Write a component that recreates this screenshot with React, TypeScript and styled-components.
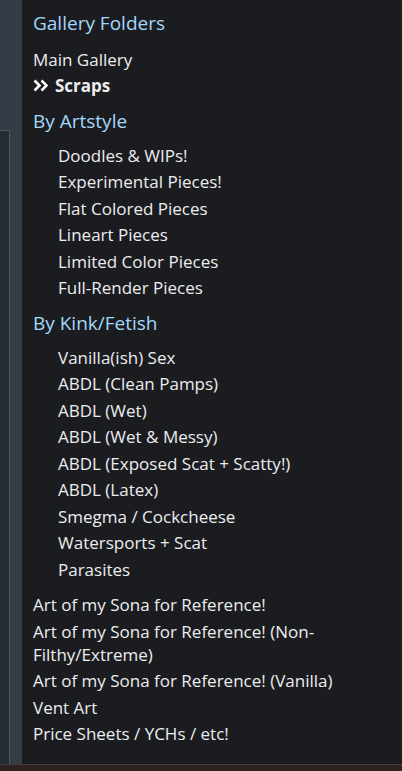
import React from "react";
import styled, { createGlobalStyle } from "styled-components";

const Global = createGlobalStyle`
  html, body { margin: 0; padding: 0; background: #1b1c20; }
  body { font-family: "Open Sans", "Noto Sans", sans-serif; }
  #root { height: 771px; }
`;

const Page = styled.div`
  height: 771px;
  display: flex;
  flex-direction: column;
  overflow: hidden;
`;

const Main = styled.div`
  flex: 1;
  display: flex;
  min-height: 0;
`;

const Rail = styled.div`
  width: 22px;
  flex-shrink: 0;
  background: #343c45;
  display: flex;
  flex-direction: column;
`;

const RailSpacer = styled.div`
  height: 130px;
  flex-shrink: 0;
`;

const RailBox = styled.div`
  flex: 1;
  width: 9px;
  background: #272c33;
  border-top: 1px solid #4b5662;
  border-right: 1px solid #4b5662;
`;

const Panel = styled.nav`
  flex: 1;
  background: #1b1c20;
  padding: 10px 10px 0 11px;
  color: #ecedef;
`;

const Title = styled.h2`
  margin: 0 0 10px;
  font-size: 19px;
  font-weight: 400;
  line-height: 26px;
  color: #a3d8fa;
`;

const Heading = styled.h3`
  margin: 9px 0 8px;
  font-size: 19px;
  font-weight: 400;
  line-height: 26px;
  color: #a3d8fa;
`;

const List = styled.ul<{ $indent?: boolean }>`
  list-style: none;
  margin: 0 0 ${(p) => (p.$indent ? "9px" : "0")};
  padding: 0 0 0 ${(p) => (p.$indent ? "25px" : "0")};
`;

const Item = styled.li<{ $active?: boolean }>`
  font-size: 17px;
  line-height: 23px;
  padding: 1.75px 0;
  font-weight: ${(p) => (p.$active ? 700 : 400)};
  display: flex;
  align-items: center;
  gap: 7px;
`;

const BottomBar = styled.div`
  height: 6px;
  flex-shrink: 0;
  background: #2d221f;
  border-top: 1px solid #45403f;
`;

const Chevrons = () => (
  <svg width="15" height="13" viewBox="0 0 15 13" fill="none">
    <path d="M1.5 1.5 L6.5 6.5 L1.5 11.5" stroke="#ffffff" strokeWidth="2.6" />
    <path d="M8.5 1.5 L13.5 6.5 L8.5 11.5" stroke="#ffffff" strokeWidth="2.6" />
  </svg>
);

const artstyle = [
  "Doodles & WIPs!",
  "Experimental Pieces!",
  "Flat Colored Pieces",
  "Lineart Pieces",
  "Limited Color Pieces",
  "Full-Render Pieces",
];

const kink = [
  "Vanilla(ish) Sex",
  "ABDL (Clean Pamps)",
  "ABDL (Wet)",
  "ABDL (Wet & Messy)",
  "ABDL (Exposed Scat + Scatty!)",
  "ABDL (Latex)",
  "Smegma / Cockcheese",
  "Watersports + Scat",
  "Parasites",
];

const misc = [
  "Art of my Sona for Reference!",
  "Art of my Sona for Reference! (Non-Filthy/Extreme)",
  "Art of my Sona for Reference! (Vanilla)",
  "Vent Art",
  "Price Sheets / YCHs / etc!",
];

export default function App() {
  return (
    <Page>
      <Global />
      <Main>
        <Rail>
          <RailSpacer />
          <RailBox />
        </Rail>
        <Panel>
          <Title>Gallery Folders</Title>
          <List>
            <Item>Main Gallery</Item>
            <Item $active>
              <Chevrons />
              Scraps
            </Item>
          </List>
          <Heading>By Artstyle</Heading>
          <List $indent>
            {artstyle.map((t) => (
              <Item key={t}>{t}</Item>
            ))}
          </List>
          <Heading>By Kink/Fetish</Heading>
          <List $indent>
            {kink.map((t) => (
              <Item key={t}>{t}</Item>
            ))}
          </List>
          <List>
            {misc.map((t) => (
              <Item key={t}>{t}</Item>
            ))}
          </List>
        </Panel>
      </Main>
      <BottomBar />
    </Page>
  );
}
